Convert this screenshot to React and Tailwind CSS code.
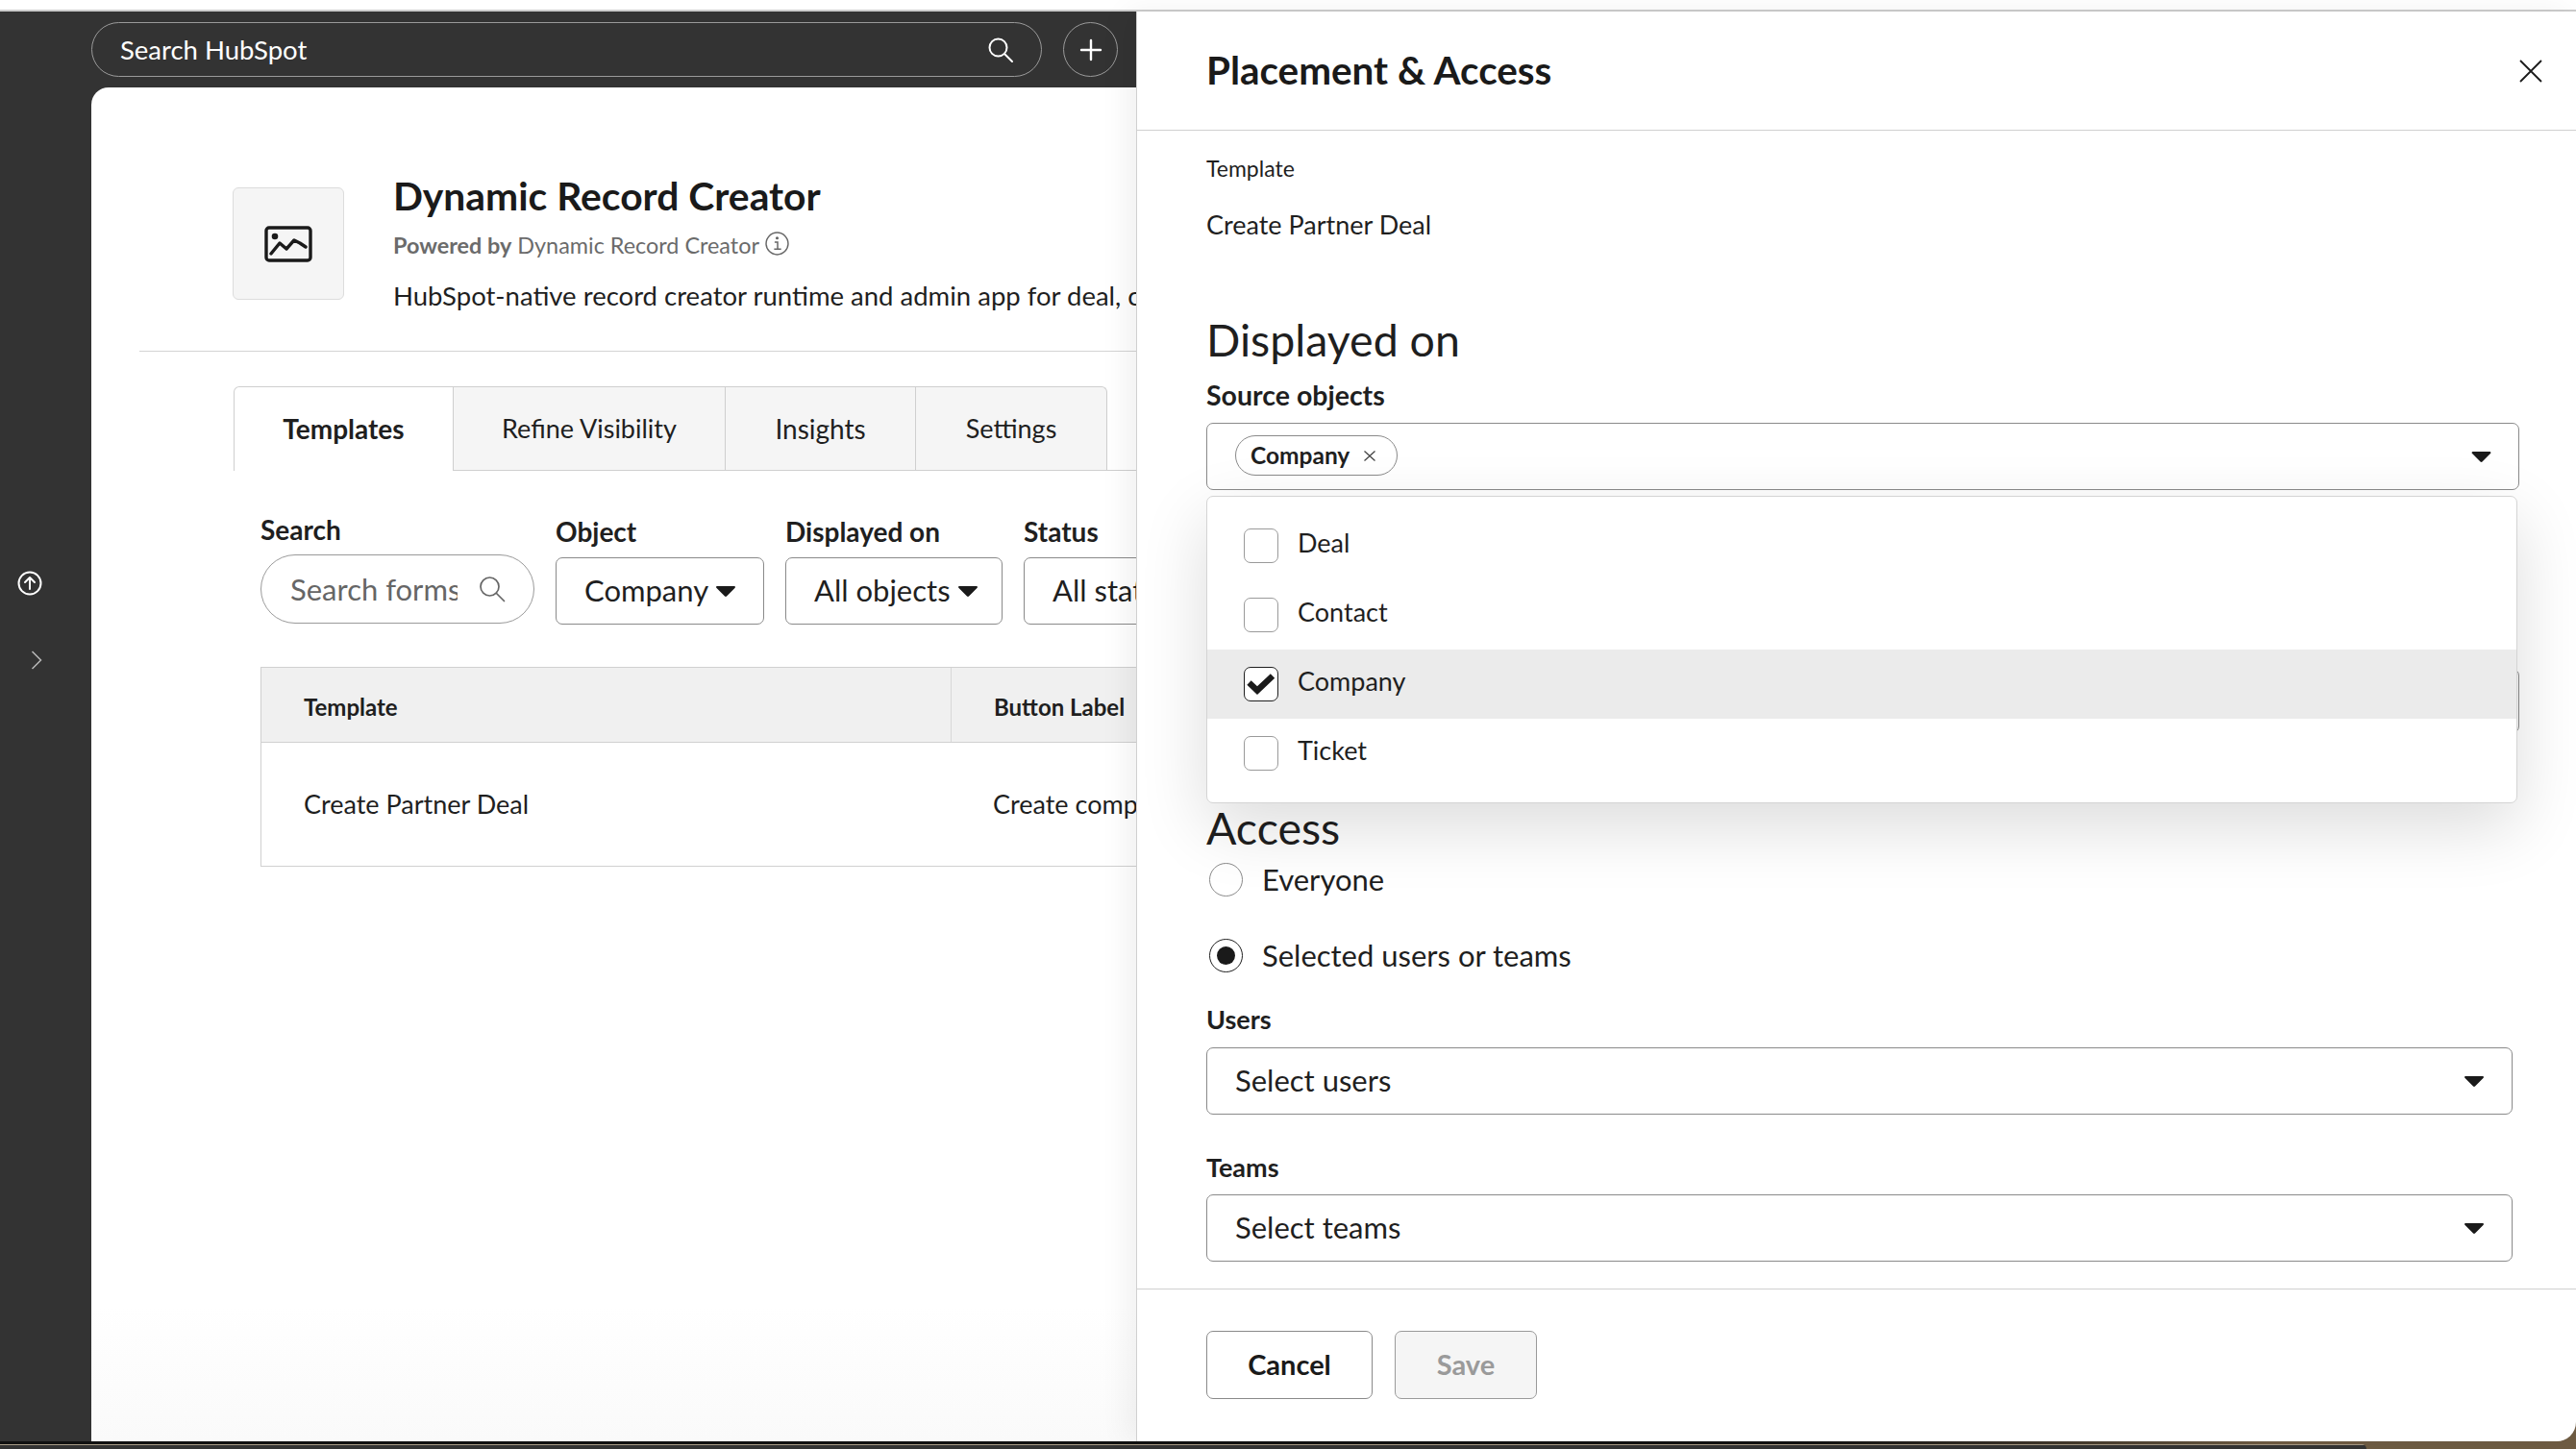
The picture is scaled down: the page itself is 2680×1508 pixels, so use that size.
import React from 'react';

function Caret({ className }) {
  return (
    <svg className={className} viewBox="0 0 20 11" fill="#1a1a1a">
      <path d="M1.2 0h17.6c1 0 1.5 1.1.9 1.8l-8.7 8.7c-.5.5-1.5.5-2 0L.3 1.8C-.3 1.1.2 0 1.2 0z" />
    </svg>
  );
}

function FilterSelect({ width, label, value }) {
  return (
    <div className="shrink-0">
      <div className="h-[30px] mt-[7px] leading-[30px] text-[28px] font-bold text-[#1f1f1f]">{label}</div>
      <div className={`${width} mt-[12px] h-[70px] pl-[29px] flex items-center gap-[8px] border border-[#8a8a8a] rounded-[7px] text-[31px] text-[#1f1f1f] whitespace-nowrap`}>
        <span className="-mt-[2px]">{value}</span>
        <Caret className="w-[20px] h-[11px]" />
      </div>
    </div>
  );
}

function PanelSelect({ className, text }) {
  return (
    <div className={`${className} w-[1359px] h-[70px] pl-[29px] pr-[29px] flex items-center justify-between border border-[#8a8a8a] rounded-[7px] text-[31px] text-[#1f1f1f]`}>
      <span className="-mt-[2px]">{text}</span>
      <Caret className="w-[20px] h-[11px]" />
    </div>
  );
}

function Option({ label, checked }) {
  return (
    <div className={`h-[72px] pl-[38px] flex items-center gap-[20px] text-[27px] text-[#1f1f1f] ${checked ? 'bg-[#ebebeb]' : ''}`}>
      <span className={`w-[36px] h-[36px] flex items-center justify-center bg-white rounded-[7px] border ${checked ? 'border-[#1f1f1f]' : 'border-[#9a9a9a]'}`}>
        {checked && (
          <svg className="w-[34px] h-[34px]" viewBox="0 0 34 34" fill="none" stroke="#1a1a1a" strokeWidth="6.4">
            <path d="M4.5 15.5l8.5 8 16-15" />
          </svg>
        )}
      </span>
      <span className="-mt-[6px]">{label}</span>
    </div>
  );
}

export default function App() {
  return (
    <div className="w-[2680px] h-[1508px] flex flex-col overflow-hidden bg-[#6f5c43] font-['Lato','Noto_Sans',sans-serif]">
      <div className="h-[10px] shrink-0 bg-white" />
      <div className="h-[2px] shrink-0 bg-[#cccccc]" />

      <div className="h-[1488px] flex">
        {/* Left rail */}
        <aside className="w-[95px] shrink-0 bg-[#333333] flex flex-col items-center">
          <svg className="w-[26px] h-[26px] mt-[582px] -ml-[34px]" viewBox="0 0 26 26" fill="none" stroke="#fff" strokeWidth="2">
            <circle cx="13" cy="13" r="11.5" />
            <path d="M13 19V7M8 12l5-5 5 5" strokeLinecap="round" strokeLinejoin="round" />
          </svg>
          <svg className="w-[12px] h-[20px] mt-[57px] -ml-[20px]" viewBox="0 0 12 20" fill="none" stroke="#b8b8b8" strokeWidth="1.5">
            <path d="M1.5 1l9 9-9 9" />
          </svg>
        </aside>

        {/* Main column */}
        <div className="w-[1087px] shrink-0 flex flex-col bg-[#333333] overflow-hidden">
          <header className="h-[79px] shrink-0 flex items-start gap-[22px] pt-[11px]">
            <div className="w-[989px] h-[57px] shrink-0 pl-[29px] pr-[28px] flex items-center justify-between rounded-full border border-[#9a9a9a] text-[27.5px] text-white">
              <span>Search HubSpot</span>
              <svg className="w-[28px] h-[28px]" viewBox="0 0 28 28" fill="none" stroke="#fff" strokeWidth="2">
                <circle cx="11.5" cy="11.5" r="9" />
                <path d="M18 18l8 8" strokeLinecap="round" />
              </svg>
            </div>
            <div className="w-[57px] h-[57px] shrink-0 flex items-center justify-center rounded-full border border-[#9a9a9a]">
              <svg className="w-[24px] h-[24px]" viewBox="0 0 24 24" fill="none" stroke="#fff" strokeWidth="2.4">
                <path d="M12 2v20M2 12h20" strokeLinecap="round" />
              </svg>
            </div>
          </header>

          <main className="flex-1 w-[1500px] rounded-tl-[18px] bg-gradient-to-b from-white from-90% to-[#fafafa] pl-[50px] pt-[104px]">
            {/* App heading */}
            <div className="flex pl-[97px] gap-[51px]">
              <div className="w-[116px] h-[117px] shrink-0 flex items-center justify-center bg-[#f5f5f5] border border-[#dcdcdc] rounded-[6px]">
                <svg className="w-[50px] h-[38px]" viewBox="0 0 50 38" fill="none" stroke="#1a1a1a" strokeWidth="3.4" strokeLinecap="round" strokeLinejoin="round">
                  <rect x="2" y="2" width="46" height="34" rx="3" />
                  <circle cx="11" cy="11" r="1.6" fill="#1a1a1a" />
                  <path d="M7 29l9-11 7 6 8-9 6 3 6 4" />
                </svg>
              </div>
              <div className="-mt-[12px]">
                <h1 className="h-[42px] leading-[42px] text-[40.8px] font-bold text-[#1a1a1a]">Dynamic Record Creator</h1>
                <div className="mt-[16px] h-[30px] flex items-center text-[23.4px] text-[#6b6b6b]">
                  <span className="font-bold">Powered by</span>
                  <span className="ml-[6px]">Dynamic Record Creator</span>
                  <svg className="w-[25px] h-[25px] ml-[6px] -mt-[5px]" viewBox="0 0 24 24" fill="none" stroke="#666" strokeWidth="1.4">
                    <circle cx="12" cy="12" r="11" />
                    <path d="M9.5 10.5H12.5V17.5M9 17.5H16" />
                    <circle cx="12" cy="6.5" r=".8" fill="#666" />
                  </svg>
                </div>
                <p className="mt-[19px] h-[36px] leading-[36px] text-[27.5px] text-[#1f1f1f] whitespace-nowrap">
                  HubSpot-native record creator runtime and admin app for deal, contact, company and ticket creation.
                </p>
              </div>
            </div>

            <div className="mt-[39px] h-px bg-[#d4d4d4]" />

            {/* Tabs */}
            <div className="mt-[36px] ml-[98px] flex h-[88px] border-b border-[#cfcfcf]">
              <div className="w-[229px] -mb-px pb-[2px] bg-white border border-b-0 border-[#cfcfcf] rounded-tl-[6px] flex items-center justify-center text-[28px] font-bold text-[#1f1f1f]">Templates</div>
              <div className="w-[283px] bg-[#f5f5f5] border-t border-r border-[#cfcfcf] flex items-center justify-center text-[27px] text-[#1f1f1f]">Refine Visibility</div>
              <div className="w-[198px] bg-[#f5f5f5] border-t border-r border-[#cfcfcf] flex items-center justify-center text-[28px] text-[#1f1f1f]">Insights</div>
              <div className="w-[199px] bg-[#f5f5f5] border-t border-r border-[#cfcfcf] rounded-tr-[6px] flex items-center justify-center text-[27px] text-[#1f1f1f]">Settings</div>
            </div>

            {/* Filters */}
            <div className="mt-[41px] ml-[126px] flex gap-[22px]">
              <div className="shrink-0">
                <div className="h-[30px] mt-[5px] leading-[30px] text-[28px] font-bold text-[#1f1f1f]">Search</div>
                <div className="w-[285px] mt-[11px] h-[72px] pl-[30px] pr-[29px] flex items-center justify-between border border-[#9a9a9a] rounded-full text-[31px] text-[#666666]">
                  <span className="w-[174px] overflow-hidden whitespace-nowrap">Search forms</span>
                  <svg className="w-[28px] h-[28px] shrink-0" viewBox="0 0 28 28" fill="none" stroke="#666" strokeWidth="1.7">
                    <circle cx="11.5" cy="11.5" r="9.5" />
                    <path d="M18.5 18.5l8 8" strokeLinecap="round" />
                  </svg>
                </div>
              </div>
              <FilterSelect width="w-[217px]" label="Object" value="Company" />
              <FilterSelect width="w-[226px]" label="Displayed on" value="All objects" />
              <FilterSelect width="w-[226px]" label="Status" value="All statuses" />
            </div>

            {/* Template table */}
            <div className="mt-[44px] ml-[126px] w-[1200px] border border-[#d0d0d0]">
              <div className="h-[78px] flex bg-[#f0f0f0] border-b border-[#d0d0d0] text-[24px] font-bold text-[#1f1f1f]">
                <div className="w-[718px] pl-[44px] pt-[4px] flex items-center border-r border-[#d8d8d8]">Template</div>
                <div className="pl-[44px] pt-[4px] flex items-center">Button Label</div>
              </div>
              <div className="h-[128px] flex text-[27px] text-[#1f1f1f]">
                <div className="w-[718px] pl-[44px] flex items-center">Create Partner Deal</div>
                <div className="pl-[43px] flex items-center">Create company deal</div>
              </div>
            </div>
          </main>
        </div>

        {/* Placement panel */}
        <section className="relative z-10 w-[1498px] shrink-0 flex flex-col bg-white border-l border-[#d0d0d0] rounded-br-[20px] shadow-[-10px_0_30px_rgba(0,0,0,0.06)]">
          <div className="h-[124px] shrink-0 pl-[72px] pr-[35px] flex items-center justify-between border-b border-[#d0d0d0]">
            <h2 className="text-[40.4px] font-bold text-[#1a1a1a]">Placement &amp; Access</h2>
            <svg className="w-[24px] h-[24px]" viewBox="0 0 24 24" fill="none" stroke="#1a1a1a" strokeWidth="1.8">
              <path d="M1 1l22 22M23 1L1 23" />
            </svg>
          </div>

          <div className="flex-1 pl-[72px]">
            <div className="mt-[24px] h-[30px] leading-[30px] text-[23px] text-[#1f1f1f]">Template</div>
            <div className="mt-[26px] h-[36px] leading-[36px] text-[27px] text-[#1f1f1f]">Create Partner Deal</div>
            <div className="mt-[73px] h-[56px] leading-[56px] text-[46.5px] text-[#1f1f1f]">Displayed on</div>
            <div className="mt-[15px] h-[30px] leading-[30px] text-[28.5px] font-bold text-[#1f1f1f]">Source objects</div>
            <div className="mt-[14px] w-[1366px] h-[70px] pl-[29px] pr-[28px] flex items-center justify-between border border-[#8a8a8a] rounded-[7px]">
              <span className="h-[42px] -mt-[2px] pl-[15px] pr-[21px] flex items-center gap-[14px] border border-[#8a8a8a] rounded-full text-[24.5px] font-bold text-[#1f1f1f]">
                Company
                <svg className="w-[14px] h-[11px]" viewBox="0 0 14 11" fill="none" stroke="#444" strokeWidth="1.3">
                  <path d="M1.5 .5l11 10M12.5 .5l-11 10" />
                </svg>
              </span>
              <Caret className="w-[21px] h-[11px]" />
            </div>
            {/* select sitting behind the open menu */}
            <div className="mt-[186px] w-[1366px] h-[67px] border border-[#8a8a8a] rounded-[7px]" />

            <div className="mt-[70px] h-[56px] leading-[56px] text-[46.5px] text-[#1f1f1f]">Access</div>
            <label className="mt-[8px] ml-[3px] h-[36px] flex items-center gap-[20px] text-[31px] text-[#1f1f1f]">
              <span className="w-[35px] h-[35px] rounded-full border border-[#8a8a8a]" />
              Everyone
            </label>
            <label className="mt-[43px] ml-[3px] h-[36px] flex items-center gap-[20px] text-[31px] text-[#1f1f1f]">
              <span className="w-[35px] h-[35px] flex items-center justify-center rounded-full border border-[#1f1f1f]">
                <span className="w-[19px] h-[19px] rounded-full bg-[#1a1a1a]" />
              </span>
              Selected users or teams
            </label>
            <div className="mt-[34px] h-[30px] leading-[30px] text-[27px] font-bold text-[#1f1f1f]">Users</div>
            <PanelSelect className="mt-[14px]" text="Select users" />
            <div className="mt-[40px] h-[30px] leading-[30px] text-[27px] font-bold text-[#1f1f1f]">Teams</div>
            <PanelSelect className="mt-[13px]" text="Select teams" />
          </div>

          <div className="h-[159px] shrink-0 pl-[72px] pt-[43px] flex items-start gap-[23px] border-t border-[#d0d0d0]">
            <button className="w-[173px] h-[71px] pb-[2px] bg-white border border-[#8a8a8a] rounded-[7px] text-[29px] font-bold text-[#1a1a1a]">Cancel</button>
            <button className="w-[148px] h-[71px] pb-[2px] bg-[#f5f5f5] border border-[#9a9a9a] rounded-[7px] text-[29px] font-bold text-[#9a9a9a]">Save</button>
          </div>

          {/* Open source-objects menu */}
          <div className="absolute left-[72px] top-[504px] w-[1364px] py-[15px] bg-white border border-[#d4d4d4] rounded-[7px] shadow-[0_24px_70px_rgba(0,0,0,0.14)]">
            <Option label="Deal" />
            <Option label="Contact" />
            <Option label="Company" checked />
            <Option label="Ticket" />
          </div>
        </section>
      </div>

      {/* Bottom edge of the window */}
      <div className="h-[3px] shrink-0 bg-gradient-to-r from-[#111111] from-70% to-[#6f5c43] to-88%" />
      <div className="w-[2462px] flex-1 flex flex-col overflow-hidden rounded-tr-[10px]">
        <div className="h-px shrink-0 bg-[#a89b86]" />
        <div className="flex-1 bg-[#333333]" />
      </div>
    </div>
  );
}
